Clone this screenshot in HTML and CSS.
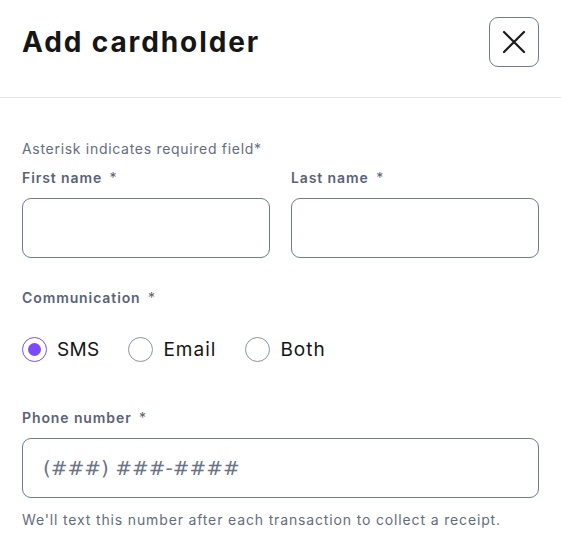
FILE: index.html
```html
<!DOCTYPE html>
<html lang="en">
<head>
<meta charset="utf-8">
<title>Add cardholder</title>
<link rel="stylesheet" href="styles.css">
</head>
<body>
<div class="modal">
  <header class="header">
    <h1 class="title">Add cardholder</h1>
    <button class="close" type="button" aria-label="Close">
      <svg width="24" height="24" viewBox="0 0 24 24" fill="none" stroke="#1a1a1a" stroke-width="2.2" stroke-linecap="round"><path d="M2 2 L22 22 M22 2 L2 22"/></svg>
    </button>
  </header>
  <form class="body">
    <p class="hint">Asterisk indicates required field*</p>
    <div class="row">
      <label class="field">
        <span class="label">First name <span class="req">*</span></span>
        <input class="input" type="text">
      </label>
      <label class="field">
        <span class="label">Last name <span class="req">*</span></span>
        <input class="input" type="text">
      </label>
    </div>
    <div class="group">
      <span class="label">Communication <span class="req">*</span></span>
      <div class="radios">
        <label class="radio"><span class="dot checked"></span>SMS</label>
        <label class="radio wide"><span class="dot"></span>Email</label>
        <label class="radio wide"><span class="dot"></span>Both</label>
      </div>
    </div>
    <label class="field phone">
      <span class="label">Phone number <span class="req">*</span></span>
      <input class="input phone-input" type="text" placeholder="(###) ###-####">
    </label>
    <p class="help">We'll text this number after each transaction to collect a receipt.</p>
  </form>
</div>
</body>
</html>
```
FILE: styles.css
```css
* { box-sizing: border-box; }
html, body { margin: 0; background: #fff; }
body {
  font-family: "Inter", "Noto Sans", sans-serif;
  color: #1a1a1a;
  width: 561px;
  height: 540px;
  overflow: hidden;
}
.modal { width: 561px; }
.header {
  display: flex;
  align-items: center;
  justify-content: space-between;
  padding: 17px 22px 30px 22px;
  border-bottom: 1px solid #e6e7ea;
}
.title {
  margin: 0;
  font-size: 28px;
  font-weight: 700;
  letter-spacing: 1.9px;
  color: #161616;
}
.close {
  width: 50px;
  height: 50px;
  border: 1px solid #6e7b91;
  border-radius: 9px;
  background: #fff;
  display: flex;
  align-items: center;
  justify-content: center;
  padding: 0;
}
.body { padding: 41px 22px 0 22px; margin: 0; }
.hint {
  margin: 0;
  font-size: 14px;
  line-height: 20px;
  letter-spacing: 0.7px;
  color: #646d7e;
}
.row {
  display: grid;
  grid-template-columns: minmax(0, 1fr) minmax(0, 1fr);
  gap: 21px;
  margin-top: 9px;
}
.field { display: flex; flex-direction: column; min-width: 0; }
.label {
  font-size: 14px;
  font-weight: 600;
  line-height: 20px;
  letter-spacing: 0.9px;
  color: #5a6376;
}
.req { font-weight: 400; margin-left: 3px; }
.input {
  margin-top: 10px;
  width: 100%;
  min-width: 0;
  height: 60px;
  border: 1px solid #6e7b91;
  border-radius: 9px;
  font: inherit;
  padding: 0 20px;
  background: #fff;
}
.group { margin-top: 30px; display: flex; flex-direction: column; }
.radios {
  display: flex;
  gap: 29px;
  margin-top: 29px;
  height: 24px;
  align-items: center;
}
.radio {
  display: flex;
  align-items: center;
  gap: 10px;
  font-size: 19px;
  letter-spacing: 0.3px;
  color: #141414;
}
.radio.wide { letter-spacing: 1px; }
.dot {
  width: 25px;
  height: 25px;
  border-radius: 50%;
  border: 1.5px solid #8a93a4;
  display: inline-block;
  position: relative;
}
.dot.checked { border-color: #7b4cf5; }
.dot.checked::after {
  content: "";
  position: absolute;
  left: 50%; top: 50%;
  width: 13px; height: 13px;
  margin: -6.5px 0 0 -6.5px;
  border-radius: 50%;
  background: #7b4cf5;
}
.phone { margin-top: 47px; }
.phone-input {
  font-family: "DejaVu Sans", sans-serif;
  font-size: 20px;
  letter-spacing: 0;
}
.phone-input::placeholder { color: #6b7486; }
.help {
  margin: 12px 0 0 0;
  font-size: 14px;
  line-height: 20px;
  letter-spacing: 0.85px;
  color: #646d7e;
}
```
